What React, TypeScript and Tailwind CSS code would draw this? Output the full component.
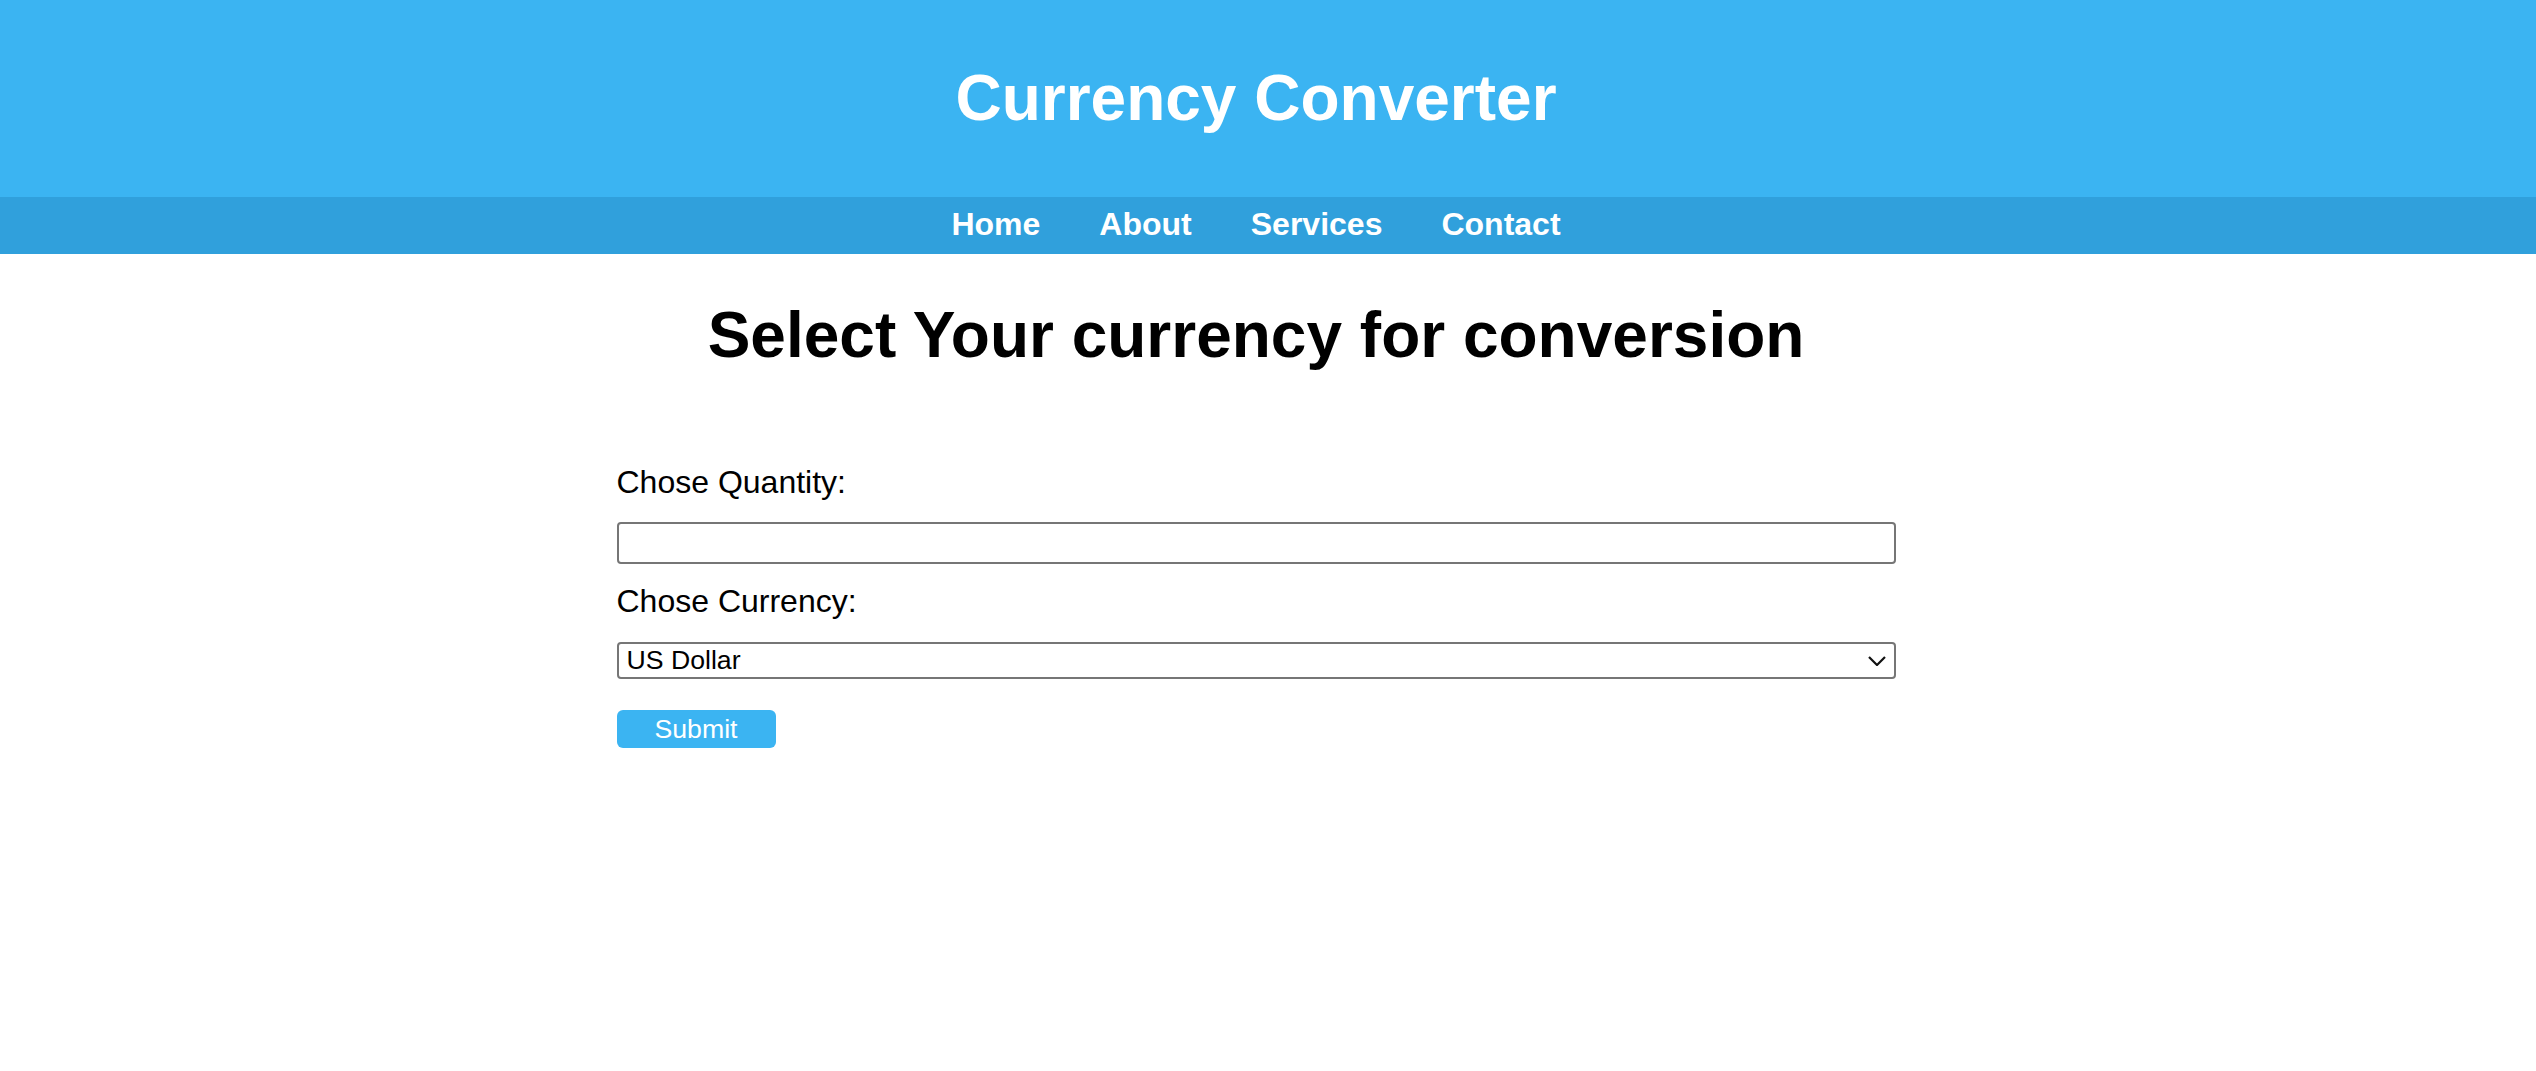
import React, { useState } from 'react';

const links = ['Home', 'About', 'Services', 'Contact'];

export default function App() {
  const [amount, setAmount] = useState('');
  const [currency, setCurrency] = useState('usd');

  return (
    <div className="min-h-screen bg-white text-black font-['Liberation_Sans',Arial,sans-serif]">
      <header className="bg-[#3bb4f2]">
        <div className="h-[197px] pt-[61px] pr-6">
          <h1 className="text-center text-[64px] leading-[74px] font-bold text-white">Currency Converter</h1>
        </div>
        <nav className="h-[57px] bg-[#30a0dc] pr-6">
          <ul className="flex justify-center gap-[59px] pt-[9px]">
            {links.map(l => (
              <li key={l}>
                <a href="#" className="text-[32px] leading-[37px] font-bold text-white">{l}</a>
              </li>
            ))}
          </ul>
        </nav>
      </header>

      <main className="pr-6">
        <h2 className="mt-[44px] text-center text-[64px] leading-[74px] font-bold">Select Your currency for conversion</h2>

        <form className="mx-auto mt-[91px] w-[1279px] flex flex-col" onSubmit={e => e.preventDefault()}>
          <label htmlFor="qty" className="text-[32px] leading-[37px] pt-[1px]">Chose Quantity:</label>
          <input
            id="qty"
            type="text"
            value={amount}
            onChange={e => setAmount(e.target.value)}
            className="mt-[21px] h-[42px] w-full border-2 border-[#767676] rounded-[4px] px-2 text-[26px] outline-none"
          />

          <label htmlFor="cur" className="mt-[19px] text-[32px] leading-[37px]">Chose Currency:</label>
          <div className="relative mt-[22px]">
            <select
              id="cur"
              value={currency}
              onChange={e => setCurrency(e.target.value)}
              className="appearance-none h-[37px] w-full border-2 border-[#767676] rounded-[4px] pl-[8px] text-[26.67px] leading-[31px] bg-white outline-none"
            >
              <option value="usd">US Dollar</option>
              <option value="eur">Euro</option>
              <option value="gbp">British Pound</option>
              <option value="inr">Indian Rupee</option>
            </select>
            {/* chevron */}
            <svg className="pointer-events-none absolute right-[10px] top-[14px]" width="18" height="10" viewBox="0 0 18 10" fill="none">
              <polyline points="1,1 9,9 17,1" stroke="#111" strokeWidth="2.2" />
            </svg>
          </div>

          <button
            type="submit"
            className="mt-[31px] h-[38px] w-[159px] rounded-[6px] bg-[#3bb4f2] text-[26.67px] leading-[30px] text-white"
          >
            Submit
          </button>
        </form>
      </main>
    </div>
  );
}
